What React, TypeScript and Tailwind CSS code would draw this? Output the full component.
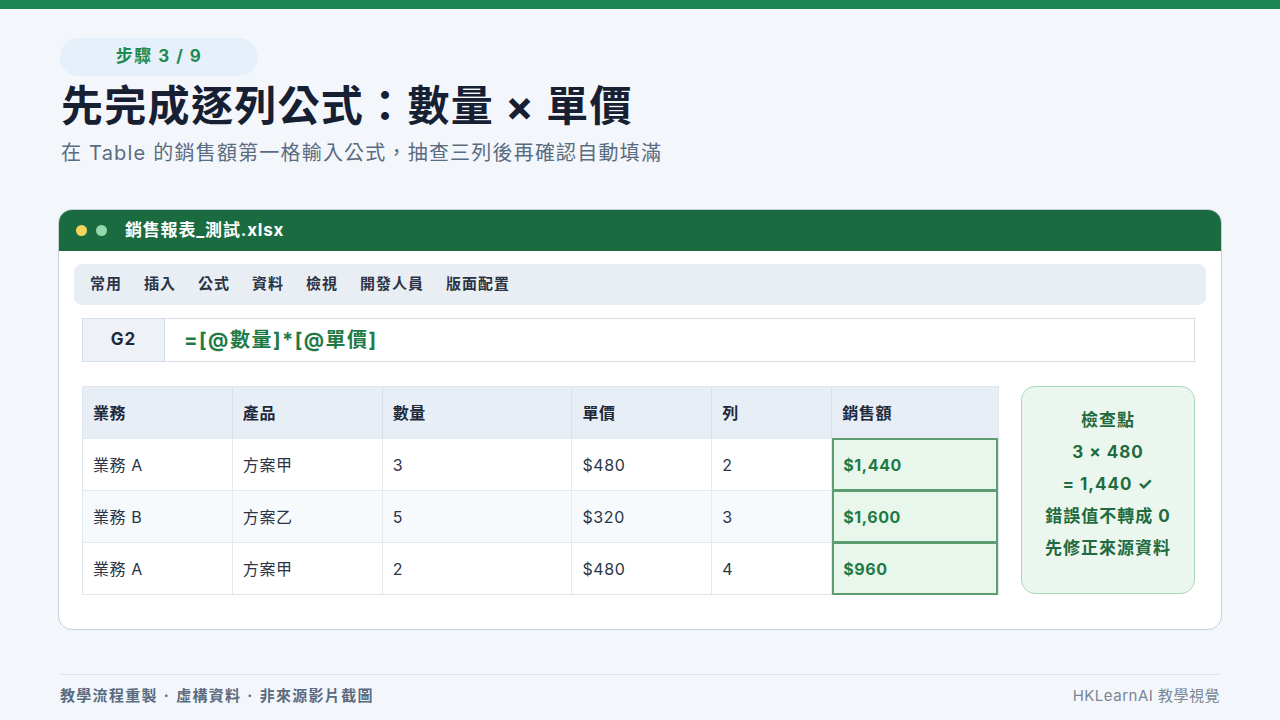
import React from 'react';

const FONT = { fontFamily: "Inter, 'Noto Sans CJK TC', sans-serif" };

const ribbon = ['常用', '插入', '公式', '資料', '檢視', '開發人員', '版面配置'];

const headers = ['業務', '產品', '數量', '單價', '列', '銷售額'];
const colWidths = ['w-[150px]', 'w-[150px]', 'w-[190px]', 'w-[140px]', 'w-[120px]', 'w-[166px]'];

const rows = [
  ['業務 A', '方案甲', '3', '$480', '2', '$1,440'],
  ['業務 B', '方案乙', '5', '$320', '3', '$1,600'],
  ['業務 A', '方案甲', '2', '$480', '4', '$960'],
];

const checks = ['檢查點', '3 × 480', '= 1,440 ✓', '錯誤值不轉成 0', '先修正來源資料'];

const App: React.FC = () => {
  return (
    <div className="w-[1280px] h-[720px] bg-[#f3f7fb] flex flex-col overflow-hidden tracking-[1px]" style={FONT}>
      <div className="h-[9px] bg-[#1b8553]" />

      <div className="px-[60px] pt-[29px]">
        {/* Step badge */}
        <div className="w-[198px] h-[38px] rounded-full bg-[#e5f0fb] flex items-center justify-center text-[17px] font-bold text-[#1f8a50] tracking-[1.5px]">
          步驟 3 / 9
        </div>
        <h1 className="mt-[4px] text-[42px] leading-[52px] font-bold text-[#172033] ml-[1px] tracking-[1.3px]">
          先完成逐列公式：數量 × 單價
        </h1>
        <p className="mt-[7px] text-[20px] leading-[28px] text-[#5b6b80] ml-[1px] tracking-[1.2px]">
          在 Table 的銷售額第一格輸入公式，抽查三列後再確認自動填滿
        </p>

        {/* Window */}
        <div className="mt-[42px] w-[1164px] -ml-[2px] h-[421px] rounded-[14px] border border-[#c5cfdb] bg-white overflow-hidden">
          <div className="h-[41px] bg-[#1a6b40] flex items-center pl-[17px]">
            <span className="w-[11px] h-[11px] rounded-full bg-[#f5d35c]" />
            <span className="ml-[9px] w-[11px] h-[11px] rounded-full bg-[#92d9aa]" />
            <span className="ml-[18px] text-[17px] font-bold text-white tracking-[0.8px]">銷售報表_測試.xlsx</span>
          </div>

          <div className="px-[15px] pt-[13px]">
            <div className="h-[41px] rounded-[8px] bg-[#e9eef5] flex items-center gap-[22px] pl-[16px] text-[15px] font-semibold text-[#2b3444]">
              {ribbon.map((r) => (
                <span key={r}>{r}</span>
              ))}
            </div>
          </div>

          <div className="pl-[23px] pr-[26px] pt-[13px]">
            <div className="h-[44px] border border-[#d6dee8] flex">
              <div className="w-[82px] bg-[#eef2f7] border-r border-[#d6dee8] flex items-center justify-center text-[17px] font-bold text-[#1e293b]">
                G2
              </div>
              <div className="flex items-center pl-[19px] text-[20px] font-bold text-[#1f7a45] tracking-[1.5px]">
                =[@數量]*[@單價]
              </div>
            </div>
          </div>

          <div className="px-[23px] pt-[24px] flex items-start gap-[22px]">
            <div className="w-[917px] border border-[#dfe6ee] tracking-[0.6px]">
              <div className="flex h-[51px] bg-[#e8eef6]">
                {headers.map((h, i) => (
                  <div
                    key={h}
                    className={`${colWidths[i]} ${i < 5 ? 'border-r border-[#d8e0ea]' : ''} flex items-center pl-[10px] text-[16px] font-semibold text-[#1e293b]`}
                  >
                    {h}
                  </div>
                ))}
              </div>
              {rows.map((row, ri) => (
                <div key={ri} className={`flex h-[52px] ${ri === 1 ? 'bg-[#f7fafd]' : 'bg-white'} border-t border-[#e3e9f0]`}>
                  {row.map((c, ci) =>
                    ci === 5 ? (
                      <div
                        key={ci}
                        className={`${colWidths[ci]} bg-[#e8f6ec] border-2 border-[#5c9e72] -my-[1px] flex items-center pl-[9px] text-[16px] font-bold text-[#1f7a45]`}
                      >
                        {c}
                      </div>
                    ) : (
                      <div
                        key={ci}
                        className={`${colWidths[ci]} border-r border-[#e3e9f0] flex items-center pl-[10px] text-[16px] text-[#2b3444]`}
                      >
                        {c}
                      </div>
                    )
                  )}
                </div>
              ))}
            </div>

            <div className="w-[174px] h-[208px] rounded-[14px] bg-[#ebf7ee] border border-[#acd9b8] flex flex-col items-center pt-[17px] text-[17px] leading-[32px] font-bold text-[#1f6b3f]">
              {checks.map((c) => (
                <div key={c}>{c}</div>
              ))}
            </div>
          </div>
        </div>
      </div>

      {/* Footer */}
      <div className="mt-auto mx-[60px] mb-[13px] border-t border-[#dce3eb] pt-[10px] flex justify-between items-center">
        <span className="text-[15px] font-bold text-[#5b6b80] tracking-[1.3px]">
          教學流程重製<span className="mx-[6px]">·</span>虛構資料<span className="mx-[6px]">·</span>非來源影片截圖
        </span>
        <span className="text-[15px] text-[#7b8696] tracking-[0.5px]">HKLearnAI 教學視覺</span>
      </div>
    </div>
  );
};

export default App;
